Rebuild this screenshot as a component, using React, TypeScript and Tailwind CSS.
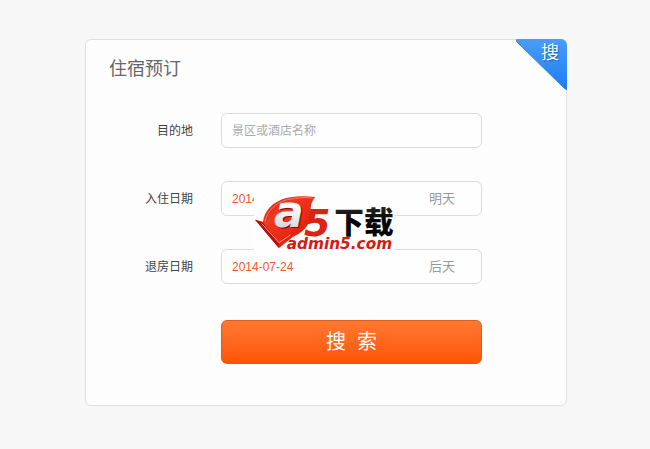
import { useState } from "react";

type DateFieldProps = {
  id: string;
  label: string;
  value: string;
  hint: string;
  onChange: (value: string) => void;
};

const labelClass = "w-[107px] shrink-0 text-right text-xs text-[#444]";
const inputClass =
  "h-[35px] w-full rounded-md border border-[#dcdcdc] bg-[#fefefe] px-2.5 text-xs outline-none focus:border-[#ff7a33]";

const DateField = ({ id, label, value, hint, onChange }: DateFieldProps) => {
  return (
    <div className="flex items-center gap-7">
      <label htmlFor={id} className={labelClass}>
        {label}
      </label>
      <div className="relative flex-1">
        <input
          id={id}
          type="text"
          value={value}
          onChange={(e) => onChange(e.target.value)}
          className={`${inputClass} text-[#f0592a]`}
        />
        <span className="pointer-events-none absolute inset-y-0 right-[27px] flex items-center text-[13px] text-[#999]">
          {hint}
        </span>
      </div>
    </div>
  );
};

const CornerBadge = () => {
  return (
    <div className="absolute -top-px -right-px h-[51px] w-[51px] overflow-hidden rounded-tr-md">
      <svg viewBox="0 0 51 51" className="h-full w-full" aria-hidden="true">
        <defs>
          <linearGradient id="corner" x1="0" y1="0" x2="0" y2="1">
            <stop offset="0" stopColor="#4a9df8" />
            <stop offset="1" stopColor="#1b7df2" />
          </linearGradient>
        </defs>
        <path d="M0 0H51V51L48 49L1 3Z" fill="url(#corner)" />
        <path d="M0 1L1 3L48 49L51 51" fill="none" stroke="#3d7fc9" />
      </svg>
      <span className="absolute top-0.5 right-2 text-lg leading-6 text-white [text-shadow:1px_1px_1px_#1762bd]">
        搜
      </span>
    </div>
  );
};

const Logo = () => {
  return (
    <svg
      viewBox="27 24 423 171"
      className="h-[57px] w-[141px] overflow-visible bg-[#fefefe]"
      role="img"
      aria-label="a5下载 admin5.com"
    >
      <defs>
        <linearGradient id="mark" x1="0" y1="0" x2="1" y2="1">
          <stop offset="0" stopColor="#b80f08" />
          <stop offset="0.35" stopColor="#f03a22" />
          <stop offset="0.75" stopColor="#e2200f" />
          <stop offset="1" stopColor="#c3150b" />
        </linearGradient>
        <linearGradient id="letter" x1="0" y1="0" x2="0" y2="1">
          <stop offset="0.4" stopColor="#ffffff" />
          <stop offset="1" stopColor="#c4c8cc" />
        </linearGradient>
        <linearGradient id="dark" x1="0" y1="0" x2="0" y2="1">
          <stop offset="0" stopColor="#3c3c3c" />
          <stop offset="0.5" stopColor="#050505" />
        </linearGradient>
      </defs>
      <path
        d="M30 104L54 110C58 76 84 50 124 39C154 32 184 33 211 36C202 46 198 56 197 70C204 104 184 140 144 155L102 189Z"
        fill="url(#mark)"
      />
      <path d="M30 104L52 112L101 171L101 189Z" fill="#b5120a" />
      <path
        d="M60 110C66 78 92 53 126 44C156 37 182 37 203 39"
        fill="none"
        stroke="#ff7a60"
        strokeWidth="3"
      />
      <path
        d="M50 116L102 173L136 150"
        fill="none"
        stroke="#ff9a86"
        strokeWidth="3"
      />
      <g fontWeight="700" fontStyle="italic" fontFamily="DejaVu Sans">
        <text x="90" y="128" fontSize="132" fill="#850a05">
          a
        </text>
        <text x="87" y="125" fontSize="132" fill="url(#letter)">
          a
        </text>
        <text x="177" y="154" fontSize="114" fill="#df2115">
          5
        </text>
        <text x="125" y="193" fontSize="46" fill="#cf1d14">
          admin5.com
        </text>
      </g>
      <text
        x="268"
        y="144"
        fontSize="89"
        fontWeight="900"
        fontFamily="Noto Sans CJK SC, sans-serif"
        fill="url(#dark)"
      >
        下载
      </text>
    </svg>
  );
};

const App = () => {
  const [place, setPlace] = useState("");
  const [checkIn, setCheckIn] = useState("2014-07-23");
  const [checkOut, setCheckOut] = useState("2014-07-24");

  return (
    <main className="min-h-screen bg-[#f7f7f7] pt-[39px] pr-4 pb-10 pl-[18px] font-['Liberation_Sans','Noto_Sans_CJK_SC',sans-serif]">
      <section className="relative mx-auto w-full max-w-[482px] rounded-md border border-[#e0e0e0] bg-[#fdfdfd] pt-[17px] pb-[41px]">
        <CornerBadge />
        <h1 className="px-[23px] text-lg leading-6 text-[#666]">住宿预订</h1>
        <form
          className="mt-8 pr-[84px]"
          onSubmit={(e) => e.preventDefault()}
        >
          <div className="relative flex flex-col gap-[33px]">
            <div className="flex items-center gap-7">
              <label htmlFor="place" className={labelClass}>
                目的地
              </label>
              <input
                id="place"
                type="text"
                value={place}
                placeholder="景区或酒店名称"
                onChange={(e) => setPlace(e.target.value)}
                className={`${inputClass} flex-1 text-[#444] placeholder:text-[#aaa]`}
              />
            </div>
            <DateField
              id="check-in"
              label="入住日期"
              value={checkIn}
              hint="明天"
              onChange={setCheckIn}
            />
            <DateField
              id="check-out"
              label="退房日期"
              value={checkOut}
              hint="后天"
              onChange={setCheckOut}
            />
            <div className="pointer-events-none absolute top-20 left-[168px]">
              <Logo />
            </div>
          </div>
          <div className="mt-9 pl-[135px]">
            <button
              type="submit"
              className="h-11 w-full rounded-md border border-[#e2591b] bg-linear-to-b from-[#ff7830] to-[#ff5400] text-xl text-white"
            >
              搜&nbsp;&nbsp;索
            </button>
          </div>
        </form>
      </section>
    </main>
  );
};

export default App;
